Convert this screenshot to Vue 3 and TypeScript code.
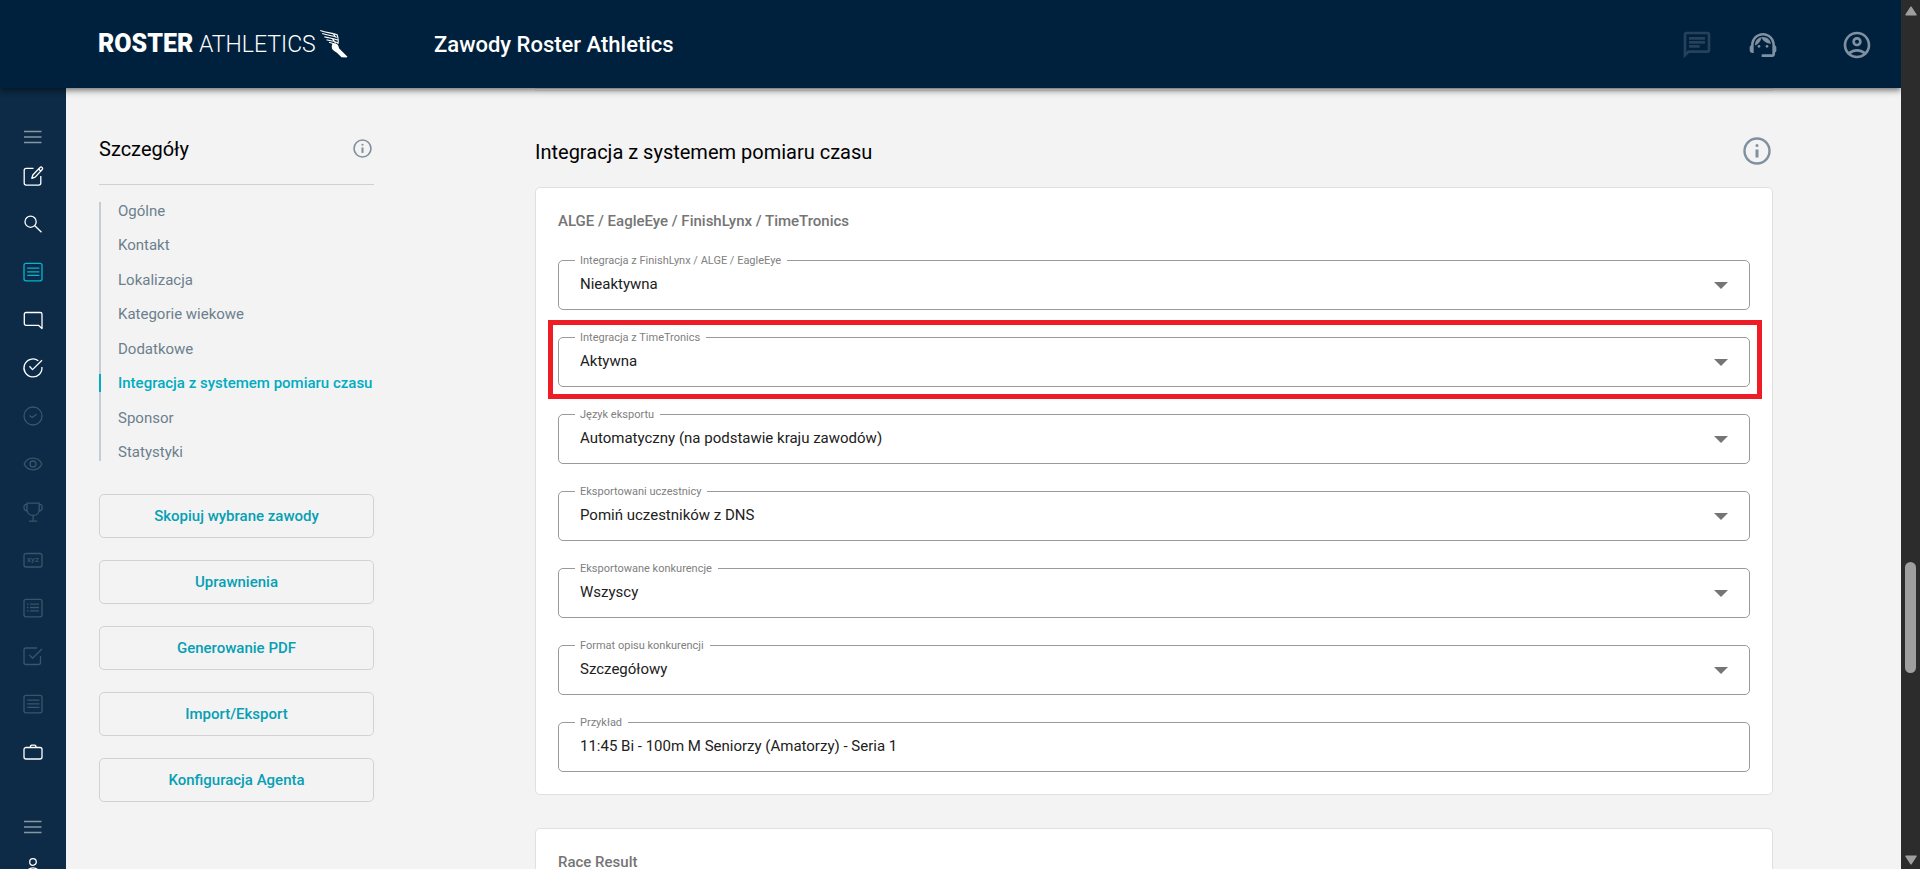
<script setup lang="ts">
interface Field {
  id: string
  label: string
  value: string
  marked?: boolean
}

interface RailItem {
  name: string
  icon: string
  tone: 'on' | 'off' | 'active'
}

const sections: string[] = [
  'Ogólne',
  'Kontakt',
  'Lokalizacja',
  'Kategorie wiekowe',
  'Dodatkowe',
  'Integracja z systemem pomiaru czasu',
  'Sponsor',
  'Statystyki',
]
const currentSection = 'Integracja z systemem pomiaru czasu'

const actions: string[] = [
  'Skopiuj wybrane zawody',
  'Uprawnienia',
  'Generowanie PDF',
  'Import/Eksport',
  'Konfiguracja Agenta',
]

const fields: Field[] = [
  { id: 'finishlynx', label: 'Integracja z FinishLynx / ALGE / EagleEye', value: 'Nieaktywna' },
  { id: 'timetronics', label: 'Integracja z TimeTronics', value: 'Aktywna', marked: true },
  { id: 'language', label: 'Język eksportu', value: 'Automatyczny (na podstawie kraju zawodów)' },
  { id: 'participants', label: 'Eksportowani uczestnicy', value: 'Pomiń uczestników z DNS' },
  { id: 'events', label: 'Eksportowane konkurencje', value: 'Wszyscy' },
  { id: 'format', label: 'Format opisu konkurencji', value: 'Szczegółowy' },
]

const rail: RailItem[] = [
  { name: 'Edycja', icon: 'M12.5 4.3H5.2a2 2 0 0 0-2 2v12.8a2 2 0 0 0 2 2h12.6a2 2 0 0 0 2-2V12M19 3.5a1.4 1.4 0 0 1 2.2 2l-7 7.6-3.4 1.2 1-3.3zM17.6 5l2 2', tone: 'on' },
  { name: 'Szukaj', icon: 'M15.2 9.7a5.6 5.6 0 1 1-11.2 0a5.6 5.6 0 0 1 11.2 0zM13.8 13.8l6.7 6.5', tone: 'on' },
  { name: 'Zawody', icon: 'M5 3.3h14a2 2 0 0 1 2 2v13.5a2 2 0 0 1-2 2H5a2 2 0 0 1-2-2V5.3a2 2 0 0 1 2-2zM6.2 8.2h12.2M6.2 11.8h12.2M6.2 15.4h12.2', tone: 'active' },
  { name: 'Wiadomości', icon: 'M5 4.5h14.3a1.7 1.7 0 0 1 1.7 1.7v14.4l-3.6-3.3H5a1.7 1.7 0 0 1-1.7-1.7V6.2a1.7 1.7 0 0 1 1.7-1.7z', tone: 'on' },
  { name: 'Zgłoszenia', icon: 'M17.3 4.7A9 9 0 1 0 20.9 11M8.5 10.2l3 3.4L21 4.2', tone: 'on' },
  { name: 'Potwierdzenia', icon: 'M21 12a9 9 0 1 1-18 0a9 9 0 0 1 18 0zM8.5 11.6l2.6 1.9 4.6-3.3', tone: 'off' },
  { name: 'Podgląd', icon: 'M3.2 12C6.5 4.2 17.5 4.2 20.8 12C17.5 19.8 6.5 19.8 3.2 12zM15 12a3 3 0 1 1-6 0a3 3 0 0 1 6 0z', tone: 'off' },
  { name: 'Wyniki', icon: 'M6 3.2h12.2v6.3c0 3.5-2.5 5.9-6.1 5.9S6 13 6 9.5zM6 4.7H4.5C3 4.7 3 7 3.1 8.3s1.4 2.5 3 2.7M18.2 4.7h1.5C21.2 4.7 21.2 7 21.1 8.3s-1.4 2.5-3 2.7M12.1 15.4v5.7M8 21.2h8.2', tone: 'off' },
  { name: 'Współrzędne', icon: 'M5 5.5h14a2 2 0 0 1 2 2v9.5a2 2 0 0 1-2 2H5a2 2 0 0 1-2-2V7.5a2 2 0 0 1 2-2z', tone: 'off' },
  { name: 'Listy startowe', icon: 'M5 3.3h14a2 2 0 0 1 2 2v13.5a2 2 0 0 1-2 2H5a2 2 0 0 1-2-2V5.3a2 2 0 0 1 2-2zM6 8.2h1.5M9 8.2h9M6 11.5h1.5M9 11.5h9M6 14.8h1.5M9 14.8h9', tone: 'off' },
  { name: 'Zadania', icon: 'M16 4H5a2 2 0 0 0-2 2v12.5a2 2 0 0 0 2 2h12.5a2 2 0 0 0 2-2V12M8.3 10.9l3.2 3.4L21 5', tone: 'off' },
  { name: 'Dokumenty', icon: 'M5 3.3h14a2 2 0 0 1 2 2v13.5a2 2 0 0 1-2 2H5a2 2 0 0 1-2-2V5.3a2 2 0 0 1 2-2zM6.2 8.2h12.2M6.2 11.8h12.2M6.2 15.4h12.2', tone: 'off' },
  { name: 'Organizacja', icon: 'M5 7.5h14a2 2 0 0 1 2 2v7.5a2 2 0 0 1-2 2H5a2 2 0 0 1-2-2V9.5a2 2 0 0 1 2-2zM9.3 7.5c0-1.7.5-2.4 1.5-2.4h2.8c1 0 1.5.7 1.5 2.4', tone: 'on' },
]

const scroll = { start: 562, size: 111, total: 869 }
const thumbStyle = {
  top: `${(scroll.start / scroll.total) * 100}%`,
  height: `${(scroll.size / scroll.total) * 100}%`,
}
</script>

<template>
  <div class="shell">
    <div class="app">
      <header class="topbar">
        <a class="brand" href="#" aria-label="Roster Athletics">
          <span class="brand-text"><b>ROSTER</b> <span>ATHLETICS</span></span>
          <svg class="wing" viewBox="0 0 28 28" aria-hidden="true">
            <path d="M12.5 13.5c2-.6 4-.3 5.500 1.400l1.200 3.600 8.300 8.200-1 .8-5-.3-4.600-4.400c-1.400-1.200-3.300-2-4.600-3.600-.8-2.100-.6-3.900.2-5.700z" fill="#fff" />
            <path d="M.3.5c6 2.500 12 2.200 16.800 4.200 1.300 3 1.300 6.300.9 9.300M2.200 3.600c5 1.700 9.800 1.600 15 3.700M4.300 6.700c4.700 1.500 8.500 1.200 13.300 3.300M6.500 9.700c4 1.300 7.200 1 11.300 3M9 12.300l5 1.500M12.500 3l3.500 4.500M12.500 8.800l3 4" fill="none" stroke="#fff" stroke-width="1.1" />
          </svg>
        </a>
        <h1>Zawody Roster Athletics</h1>
        <div class="tools">
          <button class="tool dim" type="button" aria-label="Czat">
            <svg viewBox="0 0 24 24"><path d="M4 4h16v12H5.17L4 17.17V4m0-2c-1.1 0-1.99.9-1.99 2L2 22l4-4h14c1.1 0 2-.9 2-2V4c0-1.1-.9-2-2-2H4zm2 10h8v2H6v-2zm0-3h12v2H6V9zm0-3h12v2H6V6z" /></svg>
          </button>
          <button class="tool" type="button" aria-label="Pomoc">
            <svg viewBox="0 0 24 24">
              <path d="M21 12.22C21 6.73 16.74 3 12 3c-4.69 0-9 3.65-9 9.28-.6.34-1 .98-1 1.72v2c0 1.1.9 2 2 2h1v-6.1c0-3.87 3.13-7 7-7s7 3.13 7 7V19h-8v2h8c1.1 0 2-.9 2-2v-1.22c.59-.31 1-.92 1-1.64v-2.3c0-.7-.41-1.31-1-1.62z" />
              <circle cx="9" cy="13" r="1" />
              <circle cx="15" cy="13" r="1" />
              <path d="M18 11.03C17.52 8.18 15.04 6 12.05 6c-3.03 0-6.29 2.51-6.03 6.45 2.47-1.01 4.33-3.21 4.86-5.89 1.31 2.63 4 4.44 7.12 4.47z" />
            </svg>
          </button>
          <button class="tool account" type="button" aria-label="Konto">
            <svg viewBox="0 0 24 24"><path d="M12 2C6.48 2 2 6.48 2 12s4.48 10 10 10 10-4.48 10-10S17.52 2 12 2zM7.35 18.5C8.66 17.56 10.26 17 12 17s3.34.56 4.65 1.5c-1.31.94-2.91 1.5-4.65 1.5s-3.34-.56-4.65-1.5zm10.79-1.38C16.45 15.8 14.32 15 12 15s-4.45.8-6.14 2.12C4.7 15.73 4 13.95 4 12c0-4.42 3.58-8 8-8s8 3.58 8 8c0 1.95-.7 3.73-1.86 5.12zM12 6c-1.93 0-3.5 1.57-3.5 3.5S10.07 13 12 13s3.5-1.57 3.5-3.5S13.93 6 12 6zm0 5c-.83 0-1.5-.67-1.5-1.5S11.17 8 12 8s1.5.67 1.5 1.5S12.83 11 12 11z" /></svg>
          </button>
        </div>
      </header>

      <div class="body">
        <nav class="rail" aria-label="Menu główne">
          <button class="rail-item menu" type="button" aria-label="Menu">
            <svg viewBox="0 0 24 24"><path d="M3 6.5h17.5M3 12h17.5M3 17.5h17.5" /></svg>
          </button>
          <a v-for="item in rail" :key="item.name" class="rail-item" :class="item.tone" href="#" :aria-label="item.name">
            <svg viewBox="0 0 24 24">
              <path :d="item.icon" />
              <text v-if="item.name === 'Współrzędne'" x="12" y="13.5" text-anchor="middle">xyz</text>
            </svg>
          </a>
          <button class="rail-item menu lower" type="button" aria-label="Menu użytkownika">
            <svg viewBox="0 0 24 24"><path d="M3 6.5h17.5M3 12h17.5M3 17.5h17.5" /></svg>
          </button>
          <a class="rail-item on" href="#" aria-label="Profil">
            <svg viewBox="0 0 24 24"><path d="M15.3 8a3.3 3.3 0 1 1-6.6 0a3.3 3.3 0 0 1 6.6 0zM5 21c0-9.5 14-9.5 14 0z" /></svg>
          </a>
        </nav>

        <div class="content">
          <aside class="side">
            <div class="side-head">
              <h2>Szczegóły</h2>
              <button class="info small" type="button" aria-label="Informacje o szczegółach">
                <svg viewBox="0 0 28 28"><circle class="ring" cx="14" cy="14" r="12.5" /><circle cx="14" cy="8.5" r="1.6" /><path d="M12.5 12.5h3v8h-3z" /></svg>
              </button>
            </div>
            <ul class="sections">
              <li v-for="section in sections" :key="section" :class="{ current: section === currentSection }">
                <a href="#">{{ section }}</a>
              </li>
            </ul>
            <div class="actions">
              <button v-for="action in actions" :key="action" type="button">{{ action }}</button>
            </div>
          </aside>

          <main class="main">
            <div class="card tail"></div>
            <div class="main-head">
              <h2>Integracja z systemem pomiaru czasu</h2>
              <button class="info" type="button" aria-label="Informacje o integracji">
                <svg viewBox="0 0 28 28"><circle class="ring" cx="14" cy="14" r="12.5" /><circle cx="14" cy="8.5" r="1.5" /><path d="M12.5 12.5h3v8h-3z" /></svg>
              </button>
            </div>
            <section class="card">
              <h3>ALGE / EagleEye / FinishLynx / TimeTronics</h3>
              <div class="fields">
                <div v-for="field in fields" :key="field.id" class="field" :class="{ marked: field.marked }">
                  <label :for="field.id">{{ field.label }}</label>
                  <select :id="field.id">
                    <option>{{ field.value }}</option>
                  </select>
                  <svg class="caret" viewBox="0 0 14 7" aria-hidden="true"><path d="M0 0h14L7 7z" /></svg>
                </div>
                <div class="field">
                  <label for="example">Przykład</label>
                  <input id="example" type="text" readonly value="11:45 Bi - 100m M Seniorzy (Amatorzy) - Seria 1" />
                </div>
              </div>
            </section>
            <section class="card next">
              <h3>Race Result</h3>
            </section>
          </main>
        </div>
      </div>
    </div>

    <div class="scrollbar" aria-hidden="true">
      <svg viewBox="0 0 12 10"><path d="M6 1.2L11 8.8H1z" /></svg>
      <div class="thumb" :style="thumbStyle"></div>
      <svg viewBox="0 0 12 10"><path d="M6 8.8L11 1.2H1z" /></svg>
    </div>
  </div>
</template>

<style>
body {
  margin: 0;
  background: #f3f3f3;
}
</style>

<style scoped>
.shell {
  display: flex;
  height: 100vh;
  overflow: hidden;
  font-family: Roboto, 'Liberation Sans', sans-serif;
  font-size: 15px;
  color: #212121;
}

.shell *,
.shell *::before,
.shell *::after {
  box-sizing: border-box;
}

button {
  font: inherit;
  padding: 0;
  border: 0;
  background: none;
  cursor: pointer;
}

a {
  color: inherit;
  text-decoration: none;
}

h1,
h2,
h3 {
  margin: 0;
}

svg {
  display: block;
}

.app {
  flex: 1;
  min-width: 0;
  display: flex;
  flex-direction: column;
  overflow: hidden;
}

.topbar {
  position: relative;
  z-index: 2;
  flex: none;
  height: 88px;
  display: flex;
  align-items: center;
  padding: 2px 28px 0 98px;
  background: #00213d;
  box-shadow: 0 2px 4px -1px rgba(0, 0, 0, 0.3), 0 4px 5px rgba(0, 0, 0, 0.2), 0 1px 10px rgba(0, 0, 0, 0.16);
  color: #fff;
}

.brand {
  display: flex;
  align-items: center;
  gap: 4px;
  width: 336px;
  padding-bottom: 2px;
}

.brand-text {
  font-size: 23px;
  line-height: 28px;
  font-weight: 300;
  white-space: nowrap;
}

.brand-text b {
  font-size: 25px;
  font-weight: 900;
}

.wing {
  width: 28px;
  height: 28px;
}

h1 {
  font-size: 22px;
  line-height: 28px;
  font-weight: 500;
}

.tools {
  display: flex;
  margin-left: auto;
  gap: 34px;
}

.tool {
  color: #8090a0;
}

.tool.dim {
  color: #26425a;
}

.tool.account {
  margin-left: 28px;
}

.tool svg {
  width: 32px;
  height: 32px;
  fill: currentColor;
}

.body {
  flex: 1;
  min-height: 0;
  display: flex;
}

.rail {
  flex: none;
  width: 66px;
  padding-top: 34px;
  display: flex;
  flex-direction: column;
  align-items: center;
  background: #0d2b46;
  overflow: hidden;
}

.rail-item {
  flex: none;
  display: grid;
  place-items: center;
  width: 48px;
  height: 48px;
  color: #fff;
}

.rail-item.off {
  color: #3b546a;
}

.rail-item.active {
  color: #00b8d0;
}

.rail-item.menu {
  height: 30px;
  color: #8796a4;
}

.rail-item.lower {
  margin-top: 36px;
}

.rail-item svg {
  width: 24px;
  height: 24px;
  fill: none;
  stroke: currentColor;
  stroke-width: 1.3;
  stroke-linejoin: round;
}

.rail-item text {
  font-size: 8px;
  font-weight: 500;
  fill: currentColor;
  stroke: none;
}

.content {
  flex: 1;
  min-width: 0;
  display: grid;
  grid-template-columns: 275px minmax(0, 1fr);
  gap: 161px;
  padding: 0 128px 0 33px;
  background: #f3f3f3;
}

.side {
  padding-top: 45px;
}

.side-head {
  display: flex;
  align-items: center;
  justify-content: space-between;
  height: 52px;
  padding: 0 2px 20px 0;
  border-bottom: 1px solid #d0d0d0;
}

h2 {
  font-size: 20px;
  line-height: 32px;
  font-weight: 400;
  color: #000;
}

.info {
  color: #8090a0;
}

.info svg {
  width: 28px;
  height: 28px;
  fill: currentColor;
}

.info .ring {
  fill: none;
  stroke: currentColor;
  stroke-width: 2.4;
}

.info.small svg {
  width: 19px;
  height: 19px;
}

.sections {
  display: flex;
  flex-direction: column;
  justify-content: space-between;
  height: 259px;
  margin: 17px 0 33px;
  padding: 0;
  list-style: none;
  border-left: 2px solid #c5ccd6;
  color: #6c7f8d;
  line-height: 18px;
  white-space: nowrap;
}

.sections li {
  margin-left: -2px;
  padding-left: 17px;
  border-left: 2px solid transparent;
}

.sections .current {
  border-color: #00acc1;
  color: #00acc1;
  font-weight: 500;
}

.actions {
  display: grid;
  gap: 22px;
}

.actions button {
  height: 44px;
  border: 1px solid #d2d2d2;
  border-radius: 5px;
  color: #069fb4;
  font-weight: 500;
}

.tail {
  height: 3px;
  border-top: 0;
  border-radius: 0 0 5px 5px;
}

.main-head {
  display: flex;
  align-items: center;
  justify-content: space-between;
  height: 96px;
  padding: 26px 2px 0 0;
}

.main-head .info {
  margin-bottom: 2px;
}

.card {
  background: #fff;
  border: 1px solid #e0e0e0;
  border-radius: 5px;
}

section.card {
  padding: 22px;
}

section.next {
  margin-top: 33px;
  height: 260px;
}

h3 {
  font-size: 15px;
  line-height: 22px;
  font-weight: 500;
  color: #757575;
}

.fields {
  display: grid;
  gap: 27px;
  padding-top: 28px;
}

.field {
  position: relative;
  height: 50px;
  border: 1px solid #9a9a9a;
  border-radius: 5px;
}

.field label {
  position: absolute;
  top: -7px;
  left: 16px;
  padding: 0 6px 0 5px;
  background: #fff;
  color: #808080;
  font-size: 11px;
  line-height: 14px;
}

.field select,
.field input {
  width: 100%;
  height: 48px;
  padding: 0 60px 2px 21px;
  border: 0;
  outline: 0;
  background: none;
  appearance: none;
  font: inherit;
  color: #212121;
}

.caret {
  position: absolute;
  top: 21px;
  right: 21px;
  width: 14px;
  height: 7px;
  fill: #757575;
  pointer-events: none;
}

.field.marked::before {
  content: '';
  position: absolute;
  inset: -18px -13px -13px -11px;
  border: 5px solid #ee1c25;
  pointer-events: none;
}

.scrollbar {
  position: relative;
  flex: none;
  width: 19px;
  display: flex;
  flex-direction: column;
  align-items: center;
  justify-content: space-between;
  padding: 6px 0 4px;
  background: #2c2c2c;
}

.scrollbar svg {
  width: 12px;
  height: 10px;
  fill: #9f9f9f;
  stroke: #9f9f9f;
  stroke-width: 1.5;
  stroke-linejoin: round;
}

.thumb {
  position: absolute;
  left: 4px;
  width: 11px;
  border-radius: 6px;
  background: #9f9f9f;
}
</style>
